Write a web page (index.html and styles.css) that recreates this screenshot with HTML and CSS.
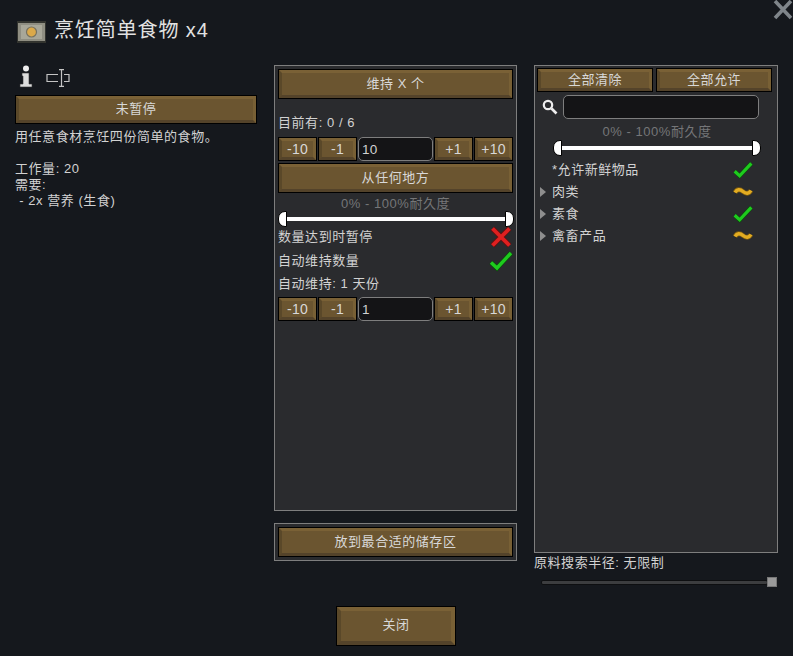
FILE: index.html
```html
<!DOCTYPE html>
<html lang="zh">
<head>
<meta charset="utf-8">
<title>烹饪简单食物 x4</title>
<link rel="stylesheet" href="styles.css">
</head>
<body>
<div class="window">
  <button class="close-x" aria-label="关闭"><svg width="20" height="20" viewBox="0 0 20 20"><path d="M2 1 L18 18 M18 1 L2 18" stroke="#7f858a" stroke-width="3.6" fill="none"/></svg></button>
  <header class="title-row">
    <svg class="food-icon" width="29" height="22" viewBox="0 0 29 22"><rect x="0" y="0" width="29" height="22" fill="#33342f"/><rect x="1" y="2" width="27" height="18" fill="#8f8e82"/><rect x="4" y="4" width="21" height="14" fill="#a8a799"/><circle cx="14.5" cy="11" r="5.6" fill="#77725f"/><circle cx="14.5" cy="11" r="4.4" fill="#dba94a"/></svg>
    <h1 class="title">烹饪简单食物 x4</h1>
  </header>
  <main class="columns">
    <section class="col-left">
      <div class="tool-icons">
        <svg width="14" height="23" viewBox="0 0 14 23"><circle cx="7" cy="3.5" r="3" fill="#eee"/><path d="M3 8 H10 V19 H13 V22 H1 V19 H4 V11 H3 Z" fill="#ddd" stroke="#333" stroke-width=".6"/></svg>
        <svg class="tool-second" width="24" height="18" viewBox="0 0 24 18"><path d="M12 5.5 H1 V12.5 H12 M18 5.5 H23 V12.5 H18 M13 .6 H18 M13 17.4 H18 M15.5 .6 V17.4" stroke="#c4c4c4" stroke-width="1.2" fill="none"/></svg>
      </div>
      <button class="btn btn-tall">未暂停</button>
      <p class="desc">用任意食材烹饪四份简单的食物。</p>
      <p class="desc desc-gap">工作量: 20<br>需要:<br>&nbsp;- 2x 营养 (生食)</p>
    </section>
    <section class="col-mid">
      <div class="panel panel-mid">
        <button class="btn btn-wide">维持 X 个</button>
        <div class="line line-count">目前有: 0 / 6</div>
        <div class="stepper">
          <button class="btn btn-step">-10</button><button class="btn btn-step">-1</button>
          <div class="field">10</div>
          <button class="btn btn-step">+1</button><button class="btn btn-step">+10</button>
        </div>
        <button class="btn btn-wide btn-from">从任何地方</button>
        <div class="muted">0% - 100%耐久度</div>
        <div class="range"><span class="cap cap-l"></span><span class="bar"></span><span class="cap cap-r"></span></div>
        <div class="toggle toggle-a"><span>数量达到时暂停</span>
          <svg width="24" height="24" viewBox="0 0 24 24"><path d="M3.5 3.5 L20.5 20.5 M20.5 3.5 L3.5 20.5" stroke="#5c1212" stroke-width="5.4" fill="none"/><path d="M3.5 3.5 L20.5 20.5 M20.5 3.5 L3.5 20.5" stroke="#e02020" stroke-width="3.8" fill="none"/></svg></div>
        <div class="toggle"><span>自动维持数量</span>
          <svg width="24" height="24" viewBox="0 0 24 24"><path d="M2 13.5 L8 19 L22 4" stroke="#0d4a0d" stroke-width="4.8" fill="none"/><path d="M2 13.5 L8 19 L22 4" stroke="#1ecb1e" stroke-width="3.4" fill="none"/></svg></div>
        <div class="line line-auto">自动维持: 1 天份</div>
        <div class="stepper">
          <button class="btn btn-step">-10</button><button class="btn btn-step">-1</button>
          <div class="field">1</div>
          <button class="btn btn-step">+1</button><button class="btn btn-step">+10</button>
        </div>
      </div>
      <div class="panel panel-store"><button class="btn btn-wide">放到最合适的储存区</button></div>
    </section>
    <section class="col-right">
      <div class="panel panel-right">
        <div class="pair"><button class="btn btn-small">全部清除</button><button class="btn btn-small">全部允许</button></div>
        <div class="search">
          <svg width="16" height="16" viewBox="0 0 16 16"><circle cx="6" cy="6" r="4.2" stroke="#eee" stroke-width="2.2" fill="none"/><path d="M9.5 9.5 L14.5 14.5" stroke="#eee" stroke-width="2.6"/></svg>
          <div class="field field-search"></div>
        </div>
        <div class="muted muted-r">0% - 100%耐久度</div>
        <div class="range range-r"><span class="cap cap-l"></span><span class="bar"></span><span class="cap cap-r"></span></div>
        <ul class="tree">
          <li class="tree-row"><span class="arrow-none"></span><span class="tree-label">*允许新鲜物品</span>
            <svg width="20" height="20" viewBox="0 0 24 24"><path d="M2 13.5 L8 19 L22 4" stroke="#0d4a0d" stroke-width="5.2" fill="none"/><path d="M2 13.5 L8 19 L22 4" stroke="#1ecb1e" stroke-width="3.8" fill="none"/></svg></li>
          <li class="tree-row"><span class="arrow"></span><span class="tree-label">肉类</span>
            <svg width="20" height="20" viewBox="0 0 20 20"><path d="M2 10.5 C4 7 7 7 10 9.5 C13 12 16 12 18 8.5" stroke="#7a5a10" stroke-width="4.8" fill="none"/><path d="M2 10.5 C4 7 7 7 10 9.5 C13 12 16 12 18 8.5" stroke="#e3ac22" stroke-width="3.4" fill="none"/></svg></li>
          <li class="tree-row"><span class="arrow"></span><span class="tree-label">素食</span>
            <svg width="20" height="20" viewBox="0 0 24 24"><path d="M2 13.5 L8 19 L22 4" stroke="#0d4a0d" stroke-width="5.2" fill="none"/><path d="M2 13.5 L8 19 L22 4" stroke="#1ecb1e" stroke-width="3.8" fill="none"/></svg></li>
          <li class="tree-row"><span class="arrow"></span><span class="tree-label">禽畜产品</span>
            <svg width="20" height="20" viewBox="0 0 20 20"><path d="M2 10.5 C4 7 7 7 10 9.5 C13 12 16 12 18 8.5" stroke="#7a5a10" stroke-width="4.8" fill="none"/><path d="M2 10.5 C4 7 7 7 10 9.5 C13 12 16 12 18 8.5" stroke="#e3ac22" stroke-width="3.4" fill="none"/></svg></li>
        </ul>
      </div>
      <div class="line radius">原料搜索半径: 无限制</div>
      <div class="radius-slider"><span class="track"></span><span class="knob"></span></div>
    </section>
  </main>
  <footer class="footer"><button class="btn btn-close">关闭</button></footer>
</div>
</body>
</html>
```
FILE: styles.css
```css
* { box-sizing: border-box; }
html, body { margin: 0; padding: 0; }
body {
  width: 793px;
  height: 656px;
  overflow: hidden;
  background: #15181d;
  color: #d2d2d2;
  font-family: "Liberation Sans", "Noto Sans CJK SC", sans-serif;
  font-size: 13px;
  letter-spacing: .55px;
  line-height: 16px;
}
.window { position: relative; width: 793px; height: 656px; padding-top: 18px; }
.close-x { position: absolute; top: 0; right: 0; width: 20px; height: 20px; padding: 0; border: 0; background: none; }
.close-x svg { display: block; }
.title-row { display: flex; align-items: center; gap: 9px; height: 22px; margin: 3px 0 0 17px; }
.food-icon { flex: none; }
.title { margin: -4px 0 0 -1px; font-size: 20px; letter-spacing: .9px; line-height: 22px; font-weight: 400; color: #e2e2e2; }
.columns { display: flex; gap: 17px; margin: 22px 0 0 15px; }
.col-left { width: 242px; }
.col-mid { width: 243px; display: flex; flex-direction: column; gap: 12px; }
.col-right { width: 244px; }
.tool-icons { display: flex; align-items: center; gap: 13px; height: 23px; margin: 0 0 7px 4px; }
.tool-second { margin-top: 3px; }

.btn {
  display: block;
  margin: 0;
  padding: 0;
  font: inherit;
  letter-spacing: inherit;
  color: #d8d8d8;
  background: #6b5530;
  border-style: solid;
  border-width: 4px;
  border-color: #7a6136 #786035 #54432a #5a4829;
  outline: 1px solid #000;
  outline-offset: -1px;
}
.btn-wide { width: 235px; height: 30px; padding-bottom: 1px; }
.btn-tall { width: 242px; height: 29px; padding-bottom: 2px; }
.btn-step { height: 24px; font-size: 14px; letter-spacing: .3px; }
.btn-small { width: 116px; height: 24px; }
.btn-close { width: 120px; height: 40px; border-width: 5px; padding-bottom: 2px; }
.btn-from { margin-top: 2px; }

.panel { border: 1px solid #7e7e7e; background: #2a2b2e; padding: 3px; }
.panel-mid { height: 446px; }
.panel-store { height: 38px; }
.panel-right { height: 488px; padding: 2px; }

.desc { margin: 5px 0 0; }
.desc-gap { margin-top: 16px; }

.line { height: 16px; }
.line-count { margin-top: 16px; margin-bottom: 6px; }
.line-auto { margin-top: 3px; margin-bottom: 5px; }
.stepper { display: grid; grid-template-columns: 39px 39px 75px 39px 39px; gap: 1px; width: 235px; }
.field {
  height: 24px;
  padding: 4px 0 0 3px;
  background: #141416;
  border: 1px solid #7e7e7e;
  border-radius: 5px;
  font-size: 13.5px;
  letter-spacing: .2px;
}
.muted { height: 16px; margin-top: 3px; margin-bottom: -1px; text-align: center; color: #757678; }
.range { display: flex; align-items: center; height: 16px; width: 236px; }
.cap { display: block; flex: none; width: 9px; height: 16px; background: #fff; border: 1px solid #000; }
.cap-l { border-radius: 7px 0 0 7px; }
.cap-r { border-radius: 0 7px 7px 0; }
.bar { flex: 1; height: 4px; background: #fff; }
.toggle { display: flex; justify-content: space-between; align-items: center; height: 24px; width: 235px; }
.toggle-a { margin-top: -2px; }

.pair { display: flex; gap: 3px; }
.search { display: flex; align-items: center; gap: 5px; margin: 3px 0 0 5px; width: 224px; }
.field-search { width: 196px; }
.muted-r { margin-top: 5px; margin-bottom: 0; width: 240px; }
.range-r { margin: 0 0 0 16px; width: 208px; }
.tree { list-style: none; margin: 3px 0 0; padding: 0; }
.tree-row { display: flex; align-items: center; height: 22px; width: 214px; margin-left: 2px; }
.tree-label { flex: 1; margin-left: 6px; }
.arrow { flex: none; width: 0; height: 0; margin-left: 1px; border-style: solid; border-width: 5.5px 0 5.5px 6px; border-color: transparent transparent transparent #8e8e8e; }
.arrow-none { flex: none; width: 7px; }
.radius { margin-top: 2px; }
.radius-slider { display: flex; align-items: center; margin: 6px 0 0 7px; width: 236px; height: 10px; }
.track { flex: 1; height: 5px; background: #3c3d3f; border: 1px solid #0e0f11; border-radius: 2px; }
.knob { flex: none; width: 10px; height: 10px; background: #9a9a9a; border: 1px solid #777; margin-left: -1px; }

.footer { display: flex; justify-content: center; margin-top: 19px; padding-right: 1px; }
```
